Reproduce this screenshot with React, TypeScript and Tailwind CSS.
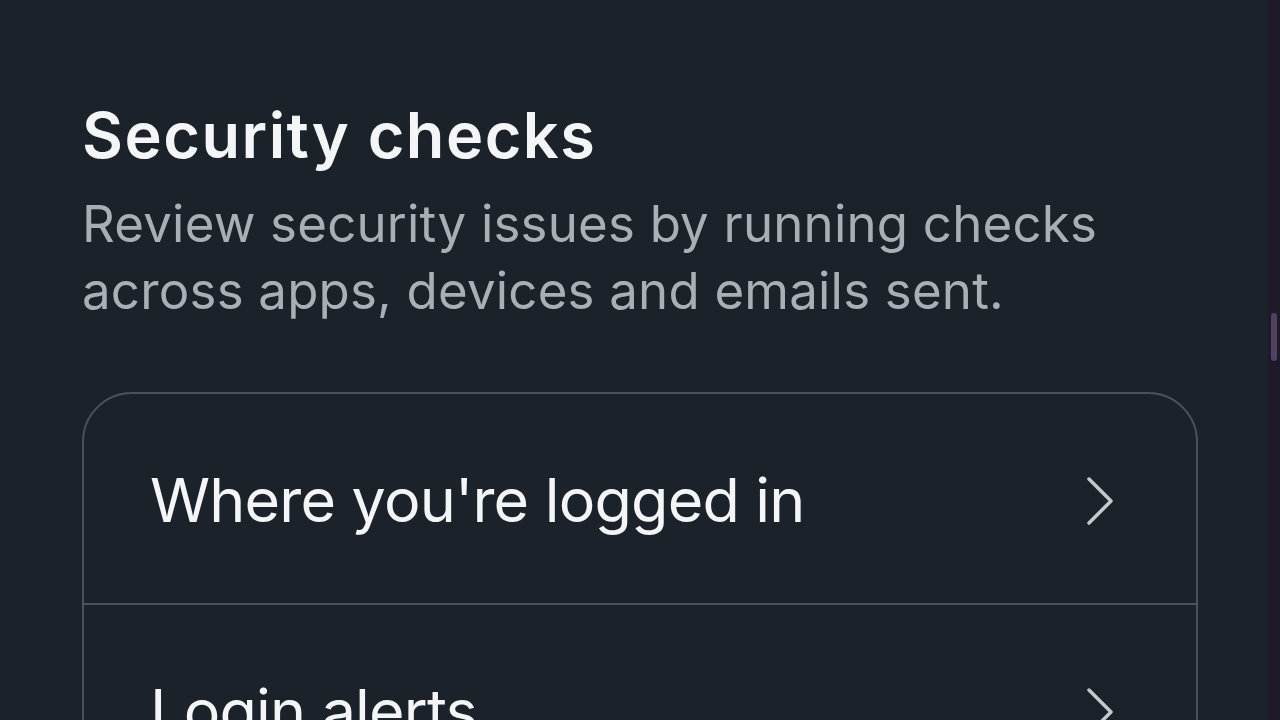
import React from 'react';

const rows = ["Where you're logged in", 'Login alerts'];

const Chevron: React.FC = () => (
  <svg width="30" height="50" viewBox="0 0 30 50" fill="none">
    <path d="M4 3 L26 25 L4 47" stroke="#c4c9ce" strokeWidth="3.5" strokeLinecap="round" strokeLinejoin="round" />
  </svg>
);

const App: React.FC = () => {
  return (
    <div className="flex h-[720px] w-[1280px] overflow-hidden bg-[#1b2229]" style={{ fontFamily: 'Inter, "Open Sans", sans-serif' }}>
      <div className="flex flex-1 flex-col pl-[82px] pt-[97px]">
        <h1 className="text-[63px] font-semibold leading-[76px] tracking-[1.5px] text-[#f3f5f7]">Security checks</h1>
        <p className="mt-[17px] w-[1060px] text-[51px] leading-[67px] tracking-[0.2px] text-[#a9afb5]">
          Review security issues by running checks across apps, devices and emails sent.
        </p>
        <div className="mt-[68px] w-[1116px] shrink-0 rounded-[50px] border-2 border-[#4a535c]">
          {rows.map((label, i) => (
            <div
              key={label}
              className={`flex items-center justify-between pl-[66px] pr-[81px] pt-[4px] ${i > 0 ? 'h-[211px] border-t-2 border-[#4a535c]' : 'h-[209px]'}`}
            >
              <span className="text-[61px] leading-none tracking-[-0.8px] text-[#f3f5f7]">{label}</span>
              <Chevron />
            </div>
          ))}
        </div>
      </div>
      <div className="flex w-[12px] flex-col bg-[#1e1a2a] pl-[3px] pt-[313px]">
        <div className="h-[48px] w-[6px] rounded-full bg-[#4f4361]" />
      </div>
    </div>
  );
};

export default App;
